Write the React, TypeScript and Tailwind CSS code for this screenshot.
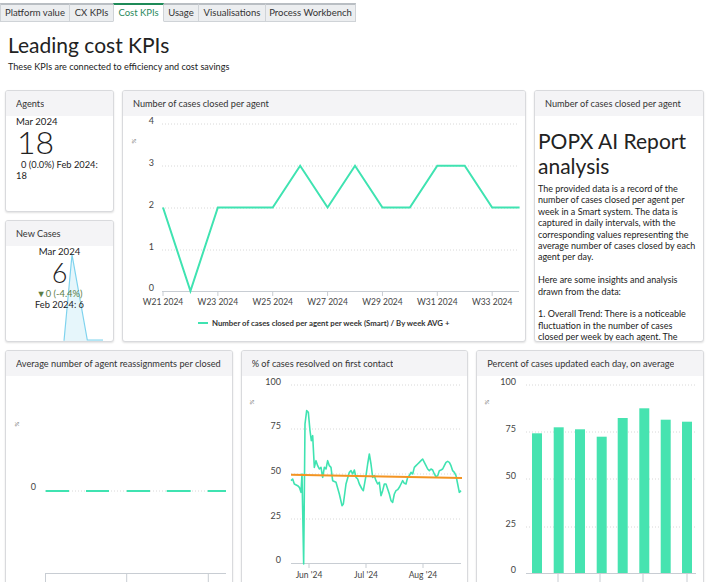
import React from "react";

const MINT = "#3fe3b1";

function Card({ title, className = "", children }: { title: string; className?: string; children?: React.ReactNode }) {
  return (
    <div className={"flex flex-col overflow-hidden rounded-[3px] border border-[#d9dadd] bg-white shadow-[0_1px_2px_rgba(0,0,0,0.12)] " + className}>
      <div className="flex h-[25px] shrink-0 items-center bg-[#f4f4f6] px-[10px] text-[9.2px] text-[#333]">
        <div className="min-w-0 overflow-hidden whitespace-nowrap">{title}</div>
      </div>
      <div className="relative flex-1 overflow-hidden">{children}</div>
    </div>
  );
}

function Pct({ x, y }: { x: number; y: number }) {
  return (
    <text x={x} y={y} fontSize={6} fill="#666" transform={`rotate(-90 ${x} ${y})`} textAnchor="middle">
      %
    </text>
  );
}

function WeeklyChart() {
  const data = [2, 0, 2, 2, 2, 3, 2, 3, 2, 2, 3, 3, 2, 2];
  const grid = [8, 50, 92, 134, 175];
  const pts = data.map((v, i) => `${40 + i * 27.43},${175 - v * 41.75}`).join(" ");
  const weeks = ["W21 2024", "W23 2024", "W25 2024", "W27 2024", "W29 2024", "W31 2024", "W33 2024"];
  return (
    <svg width={402} height={224} className="block">
      <Pct x={13} y={25} />
      {grid.slice(0, 4).map((y, i) => (
        <line key={i} x1={39} x2={396} y1={y} y2={y} stroke="#d8d8d8" strokeWidth={1} strokeDasharray="1 2" />
      ))}
      <line x1={39} x2={396} y1={175.5} y2={175.5} stroke="#c8cdd3" strokeWidth={1} />
      {["4", "3", "2", "1", "0"].map((t, i) => (
        <text key={t} x={31} y={grid[i]} fontSize={9} fill="#444" textAnchor="end">
          {t}
        </text>
      ))}
      {weeks.map((w, k) => (
        <g key={w}>
          <line x1={40 + k * 54.86} x2={40 + k * 54.86} y1={175} y2={180} stroke="#c8cdd3" />
          <text x={40 + k * 54.86} y={189} fontSize={8.5} fill="#444" textAnchor="middle">
            {w}
          </text>
        </g>
      ))}
      <polyline points={pts} fill="none" stroke={MINT} strokeWidth={2} strokeLinejoin="miter" />
      <line x1={75} x2={85} y1={207} y2={207} stroke={MINT} strokeWidth={2} />
      <text x={89} y={210} fontSize={7.8} fontWeight={700} fill="#333">
        Number of cases closed per agent per week (Smart) / By week AVG +
      </text>
    </svg>
  );
}

function ReassignChart() {
  const dashes: [number, number][] = [
    [39.7, 63],
    [80, 103],
    [120.7, 144],
    [160.7, 184.7],
    [201.7, 220],
  ];
  return (
    <svg width={225} height={240} className="block">
      <Pct x={13} y={48} />
      <text x={30} y={114} fontSize={9} fill="#444" textAnchor="end">
        0
      </text>
      <line x1={39} x2={220} y1={115} y2={115} stroke="#d8d8d8" strokeDasharray="1 2" />
      {dashes.map(([a, b], i) => (
        <line key={i} x1={a} x2={b} y1={115} y2={115} stroke={MINT} strokeWidth={2} />
      ))}
      <line x1={39} x2={220} y1={197.5} y2={197.5} stroke="#c8cdd3" />
      {[39.5, 120.7, 202.3].map((x, i) => (
        <line key={i} x1={x} x2={x} y1={197} y2={215} stroke="#c8cdd3" />
      ))}
    </svg>
  );
}

const FCR: [number, number][] = [
  [165, 410], [170, 405], [175, 420], [185, 425], [190, 430], [195, 445], [198, 390], [203, 660], [207, 240], [212, 200], [217, 205],
  [222, 260], [226, 290], [230, 275], [235, 370], [240, 350], [245, 365], [250, 375], [255, 370], [260, 400], [265, 370], [270, 375],
  [275, 350], [280, 365], [285, 370], [290, 410], [300, 415], [310, 450], [318, 485], [322, 480], [330, 420], [340, 385], [345, 380],
  [350, 390], [355, 378], [360, 400], [365, 405], [370, 420], [378, 435], [382, 440], [390, 395], [395, 360], [400, 330], [405, 360],
  [410, 400], [415, 395], [420, 410], [425, 420], [430, 415], [435, 455], [440, 440], [445, 420], [450, 420], [455, 435], [460, 450],
  [465, 470], [470, 475], [475, 450], [480, 440], [485, 437], [490, 430], [495, 420], [500, 410], [505, 418], [510, 420], [515, 400],
  [520, 395], [525, 385], [530, 390], [535, 370], [540, 365], [545, 360], [550, 355], [555, 350], [560, 345], [565, 355], [570, 365],
  [575, 375], [580, 380], [585, 375], [590, 378], [595, 390], [600, 398], [605, 395], [610, 380], [615, 378], [620, 375], [625, 365],
  [630, 355], [635, 352], [640, 355], [645, 365], [650, 380], [655, 385], [660, 395], [665, 420], [670, 445], [675, 440],
];

function FirstContactChart() {
  const grid = [9, 53, 98, 143, 187];
  const pts = FCR.map(([x, y]) => `${x / 3 - 6},${y / 3 - 32}`).join(" ");
  return (
    <svg width={225} height={240} className="block">
      <Pct x={12} y={26} />
      {grid.slice(0, 4).map((y, i) => (
        <line key={i} x1={49} x2={219} y1={y} y2={y} stroke="#d8d8d8" strokeDasharray="1 2" />
      ))}
      <line x1={49} x2={219} y1={187.5} y2={187.5} stroke="#c8cdd3" />
      {["100", "75", "50", "25", "0"].map((t, i) => (
        <text key={t} x={39} y={grid[i]} fontSize={9} fill="#444" textAnchor="end">
          {t}
        </text>
      ))}
      {[
        [67, "Jun '24"],
        [124, "Jul '24"],
        [181, "Aug '24"],
      ].map(([x, t]) => (
        <g key={t as string}>
          <line x1={x as number} x2={x as number} y1={187} y2={192} stroke="#c8cdd3" />
          <text x={x as number} y={202} fontSize={8.5} fill="#444" textAnchor="middle">
            {t}
          </text>
        </g>
      ))}
      <polyline points={pts} fill="none" stroke={MINT} strokeWidth={1.6} strokeLinejoin="round" />
      <line x1={49} y1={98.7} x2={220} y2={102} stroke="#f39422" strokeWidth={2} />
    </svg>
  );
}

function UpdatedChart() {
  const grid = [9, 56, 103, 151, 197];
  const xs = [55, 76.7, 98, 119.7, 140.7, 162.3, 183.7, 205];
  const tops = [57.3, 51.3, 53.3, 60.7, 42, 32.3, 43.7, 45.7];
  return (
    <svg width={226} height={240} className="block">
      <Pct x={12} y={26} />
      {grid.slice(0, 4).map((y, i) => (
        <line key={i} x1={49} x2={219} y1={y} y2={y} stroke="#d8d8d8" strokeDasharray="1 2" />
      ))}
      {["100", "75", "50", "25", "0"].map((t, i) => (
        <text key={t} x={39} y={grid[i]} fontSize={9} fill="#444" textAnchor="end">
          {t}
        </text>
      ))}
      {xs.map((x, i) => (
        <rect key={i} x={x} y={tops[i]} width={10} height={197 - tops[i]} fill="#46e3b0" />
      ))}
      <line x1={49} x2={219} y1={197.5} y2={197.5} stroke="#c8cdd3" />
      {[81, 123, 166, 210].map((x, i) => (
        <line key={i} x1={x} x2={x} y1={197} y2={212} stroke="#c8cdd3" />
      ))}
    </svg>
  );
}

const tabs = [
  { t: "Platform value", w: "w-[70px]" },
  { t: "CX KPIs", w: "w-[45px]" },
  { t: "Cost KPIs", w: "w-[51px]", active: true },
  { t: "Usage", w: "w-[36px]" },
  { t: "Visualisations", w: "w-[68px]" },
  { t: "Process Workbench", w: "w-[91px]" },
];

const aiLines = [
  "The provided data is a record of the",
  "number of cases closed per agent per",
  "week in a Smart system. The data is",
  "captured in daily intervals, with the",
  "corresponding values representing the",
  "average number of cases closed by each",
  "agent per day.",
  "",
  "Here are some insights and analysis",
  "drawn from the data:",
  "",
  "1. Overall Trend: There is a noticeable",
  "fluctuation in the number of cases",
  "closed per week by each agent. The",
];

export default function App() {
  return (
    <div className="min-h-[582px] bg-white text-[#222] [font-family:Lato,'Open_Sans',sans-serif]">
      <div className="flex pt-[3px]">
        {tabs.map((tab, i) => (
          <div
            key={tab.t}
            className={
              "flex h-[19px] items-center justify-center whitespace-nowrap border border-[#cfd3d7] text-[9.5px] " +
              tab.w +
              (i > 0 ? " -ml-px" : "") +
              (tab.active
                ? " relative border-t-2 border-t-[#1e8a58] border-b-white bg-white text-[#2a8a5c]"
                : " border-t-2 border-t-[#b9bec3] bg-[#eceef0] text-[#333]")
            }
          >
            {tab.t}
          </div>
        ))}
      </div>
      <div className="mt-[10px] pl-[8px] text-[21px] leading-[25px] text-[#222]">Leading cost KPIs</div>
      <div className="mt-[4px] pl-[8px] text-[9.1px] leading-[12px] text-[#222]">
        These KPIs are connected to efficiency and cost savings
      </div>

      <div className="mt-[17px] flex gap-[8px] px-[5px]">
        <div className="flex w-[109px] shrink-0 flex-col gap-[8px]">
          <Card title="Agents" className="h-[122px]">
            <div className="pl-[10px] text-[#222]">
              <div className="text-[9.6px] leading-[12px]">Mar 2024</div>
              <div className="pl-[1px] text-[32px] font-light leading-[28px]">18</div>
              <div className="mt-[2.5px] text-[9.3px] leading-[11px]">
                <span className="pl-[5px]">0 (0.0%) Feb 2024:</span>
                <br />
                18
              </div>
            </div>
          </Card>
          <Card title="New Cases" className="h-[122px]">
            <svg width={107} height={95} className="absolute left-0 top-0">
              <polygon points="58,95 66,8.7 81.3,94 97,94 97,95" fill="#e6f6fb" />
              <polyline points="58,94.7 66,8.7 81.3,94 97,94" fill="none" stroke="#7fd3ee" strokeWidth={1.2} />
            </svg>
            <div className="relative flex flex-col items-center text-[#222]">
              <div className="text-[9.6px] leading-[11px]">Mar 2024</div>
              <div className="mt-[4px] text-[27px] font-light leading-[24px]">6</div>
              <div className="mt-[3px] text-[9.3px] leading-[11px] text-[#5b7d45]">▼0 (-4.4%)</div>
              <div className="text-[9.3px] leading-[11px]">Feb 2024: 6</div>
            </div>
          </Card>
        </div>
        <Card title="Number of cases closed per agent" className="h-[252px] w-[404px] shrink-0">
          <WeeklyChart />
        </Card>
        <Card title="Number of cases closed per agent" className="h-[252px] w-[170px] shrink-0">
          <div className="px-[3px] pt-[12px] text-[#222]">
            <div className="text-[21px] leading-[25px]">
              POPX AI Report
              <br />
              analysis
            </div>
            <div className="mt-[5px] text-[9px] leading-[11.4px]">
              {aiLines.map((l, i) => (
                <div key={i} className="h-[11.4px] whitespace-nowrap">
                  {l}
                </div>
              ))}
            </div>
          </div>
        </Card>
      </div>

      <div className="mt-[8px] grid grid-cols-3 gap-[8px] px-[5px]">
        <Card title="Average number of agent reassignments per closed case" className="h-[252px]">
          <ReassignChart />
        </Card>
        <Card title="% of cases resolved on first contact" className="h-[252px]">
          <FirstContactChart />
        </Card>
        <Card title="Percent of cases updated each day, on average" className="h-[252px]">
          <UpdatedChart />
        </Card>
      </div>
    </div>
  );
}
